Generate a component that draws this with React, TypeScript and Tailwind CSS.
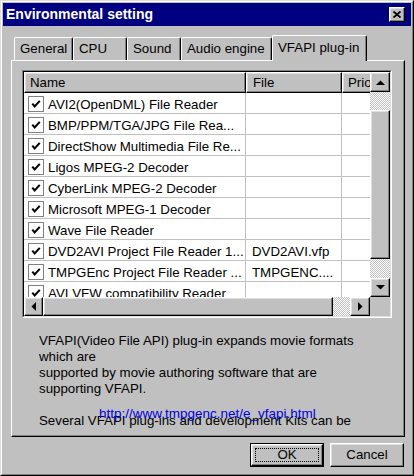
import React from "react";

const raised =
  "border border-t-white border-l-white border-r-black border-b-black shadow-[inset_-1px_-1px_0_#808080,inset_1px_1px_0_#dfdfdf] bg-[#c0c0c0]";
const checker =
  "bg-[image:repeating-conic-gradient(#c0c0c0_0_25%,#ffffff_0_50%)] bg-size-[2px_2px]";

type Plugin = { name: string; file: string };

const plugins: Plugin[] = [
  { name: "AVI2(OpenDML) File Reader", file: "" },
  { name: "BMP/PPM/TGA/JPG File Rea...", file: "" },
  { name: "DirectShow Multimedia File Re...", file: "" },
  { name: "Ligos MPEG-2 Decoder", file: "" },
  { name: "CyberLink MPEG-2 Decoder", file: "" },
  { name: "Microsoft MPEG-1 Decoder", file: "" },
  { name: "Wave File Reader", file: "" },
  { name: "DVD2AVI Project File Reader 1...", file: "DVD2AVI.vfp" },
  { name: "TMPGEnc Project File Reader ...", file: "TMPGENC...." },
  { name: "AVI VFW compatibility Reader", file: "" },
];

function Arrow({ dir }: { dir: "up" | "down" | "left" | "right" }) {
  const pts = {
    up: "0,5 9,5 4.5,0.5",
    down: "0,0 9,0 4.5,4.5",
    left: "5,0 5,9 0.5,4.5",
    right: "0,0 0,9 4.5,4.5",
  }[dir];
  const vertical = dir === "up" || dir === "down";
  return (
    <svg width={vertical ? 9 : 5} height={vertical ? 5 : 9} viewBox={vertical ? "0 0 9 5" : "0 0 5 9"}>
      <polygon points={pts} fill="black" />
    </svg>
  );
}

function Tab({ label, width, active }: { label: string; width: string; active?: boolean }) {
  if (active) {
    return (
      <div
        className={`${width} h-[26px] -mb-px relative z-10 bg-[#c0c0c0] border-t border-l border-r border-t-white border-l-white border-r-black rounded-t-[2px] shadow-[inset_-1px_0_0_#808080] flex items-center pl-[5px] pb-[2px]`}
      >
        {label}
      </div>
    );
  }
  return (
    <div
      className={`${width} h-[23px] bg-[#c0c0c0] border-t border-l border-r border-t-white border-l-white border-r-black rounded-t-[2px] shadow-[inset_-1px_0_0_#808080] flex items-center pl-[5px]`}
    >
      {label}
    </div>
  );
}

function CheckBox() {
  return (
    <div className="ml-[4px] mt-[2px] w-[16px] h-[16px] shrink-0 border border-[#808080] bg-white flex items-start justify-start">
      <svg width="14" height="14" viewBox="0 0 14 14" className="mt-[1px] ml-px">
        <path d="M2.5 5.5 L5 8.5 L10.5 2.5" stroke="black" strokeWidth="2.2" fill="none" />
      </svg>
    </div>
  );
}

export default function App() {
  return (
    <div className="w-[414px] h-[476px] bg-[#c0c0c0] border border-t-[#dfdfdf] border-l-[#dfdfdf] border-r-black border-b-black font-['Liberation_Sans',Arial,sans-serif] text-[13.3px] text-black">
      <div className="h-full border border-t-white border-l-white border-r-[#808080] border-b-[#808080] p-px flex flex-col">
        {/* title bar */}
        <div className="h-[23px] shrink-0 bg-[#000080] flex items-center justify-between pl-[3px] pr-[6px]">
          <span className="text-white font-bold text-[14px]">Environmental setting</span>
          <div className={`${raised} w-[16px] h-[15px] flex items-center justify-center`}>
            <svg width="8" height="7" viewBox="0 0 8 7">
              <path d="M0.5 0.5 L7.5 6.5 M7.5 0.5 L0.5 6.5" stroke="black" strokeWidth="1.8" />
            </svg>
          </div>
        </div>

        {/* tabs */}
        <div className="mt-[9px] ml-[11px] h-[25px] flex items-end shrink-0">
          <Tab label="General" width="w-[59px]" />
          <Tab label="CPU" width="w-[54px]" />
          <Tab label="Sound" width="w-[54px]" />
          <Tab label="Audio engine" width="w-[91px]" />
          <Tab label="VFAPI plug-in" width="w-[95px]" active />
        </div>

        {/* tab panel */}
        <div className="ml-[8px] w-[394px] h-[377px] shrink-0 border border-t-white border-l-white border-r-black border-b-black shadow-[inset_-1px_-1px_0_#808080]">
          <div className="ml-[10px] mt-[9px] w-[370px] h-[248px] border border-t-[#808080] border-l-[#808080] border-r-white border-b-white">
            <div className="h-full border border-t-black border-l-black border-r-[#dfdfdf] border-b-[#dfdfdf] bg-white grid grid-cols-[346px_20px] grid-rows-[225px_19px]">
              <div className="overflow-hidden">
                <div className="flex h-[21px]">
                  <div className={`${raised} w-[222px] shrink-0 pl-[5px] flex items-center`}>Name</div>
                  <div className={`${raised} w-[96px] shrink-0 pl-[6px] flex items-center`}>File</div>
                  <div className={`${raised} w-[80px] shrink-0 pl-[5px] flex items-center`}>Priority</div>
                </div>
                {plugins.map((p) => (
                  <div key={p.name} className="flex h-[21px] border-b border-[#c0c0c0]">
                    <div className="w-[222px] shrink-0 flex items-center border-r border-[#c0c0c0] overflow-hidden whitespace-nowrap">
                      <CheckBox />
                      <span className="ml-[4px] pt-[3px]">{p.name}</span>
                    </div>
                    <div className="w-[96px] shrink-0 flex items-center pl-[6px] pt-[3px] border-r border-[#c0c0c0] whitespace-nowrap overflow-hidden">
                      {p.file}
                    </div>
                    <div className="w-[80px] shrink-0" />
                  </div>
                ))}
              </div>

              {/* vertical scrollbar */}
              <div className="flex flex-col">
                <div className={`${raised} h-[20px] flex items-center justify-center`}>
                  <Arrow dir="up" />
                </div>
                <div className={`${checker} h-[18px]`} />
                <div className={`${raised} h-[149px]`} />
                <div className={`${checker} h-[19px]`} />
                <div className={`${raised} h-[19px] flex items-center justify-center`}>
                  <Arrow dir="down" />
                </div>
              </div>

              {/* horizontal scrollbar */}
              <div className="flex">
                <div className={`${raised} w-[19px] flex items-center justify-center`}>
                  <Arrow dir="left" />
                </div>
                <div className={`${raised} w-[290px]`} />
                <div className={`${checker} w-[17px]`} />
                <div className={`${raised} w-[20px] flex items-center justify-center`}>
                  <Arrow dir="right" />
                </div>
              </div>
              <div className="bg-[#c0c0c0]" />
            </div>
          </div>

          {/* description */}
          <div className="relative ml-[27px] mt-[15px] h-[96px] overflow-hidden leading-[16px]">
            <p>VFAPI(Video File API) plug-in expands movie formats</p>
            <p>which are</p>
            <p>supported by movie authoring software that are</p>
            <p>supporting VFAPI.</p>
            <p>&nbsp;</p>
            <p>Several VFAPI plug-ins and development Kits can be</p>
            <span className="absolute left-[60px] top-[73px] text-[#0000e0] text-[13.5px]">
              http://www.tmpgenc.net/e_vfapi.html
            </span>
          </div>
        </div>

        {/* buttons */}
        <div className="mt-[6px] mr-[7px] flex justify-end gap-[6px]">
          <div className="w-[74px] h-[24px] border border-black">
            <div className={`${raised} h-full p-[3px]`}>
              <div className="h-full border border-dotted border-black flex items-center justify-center">OK</div>
            </div>
          </div>
          <div className={`${raised} w-[74px] h-[24px] flex items-center justify-center`}>Cancel</div>
        </div>
      </div>
    </div>
  );
}
